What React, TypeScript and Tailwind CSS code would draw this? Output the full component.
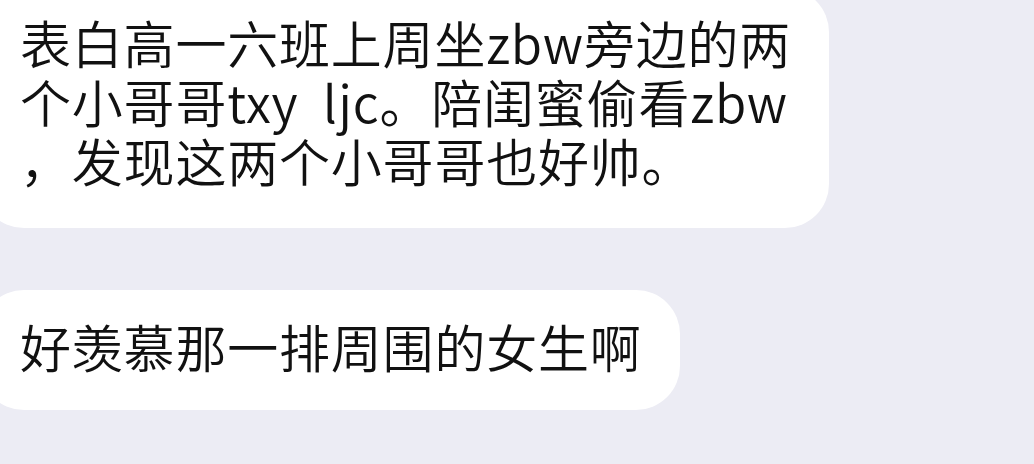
const font = { fontFamily: '"Noto Sans CJK SC", "Noto Sans", sans-serif' };

const Bubble = ({ lines, className = '' }: { lines: string[]; className?: string }) => {
  return (
    <div
      className={`w-fit -ml-[20px] bg-white rounded-[44px] pl-[40px] pr-[38px] text-[51px] font-[350] leading-[59px] tracking-[0.8px] text-[#111111] ${className}`}
      style={font}
    >
      {lines.map((line, i) => (
        <div key={i} className="whitespace-pre">
          {line}
        </div>
      ))}
    </div>
  );
};

export default function App() {
  return (
    <div className="w-[1034px] h-[464px] overflow-hidden bg-[#ececf4]">
      <div className="flex flex-col gap-[62px] -mt-[12px]">
        <Bubble
          className="pt-[25px] pb-[38px]"
          lines={[
            '表白高一六班上周坐zbw旁边的两',
            '个小哥哥txy  ljc。陪闺蜜偷看zbw',
            '，发现这两个小哥哥也好帅。',
          ]}
        />
        <Bubble className="pt-[27px] pb-[34px]" lines={['好羡慕那一排周围的女生啊']} />
      </div>
    </div>
  );
}
